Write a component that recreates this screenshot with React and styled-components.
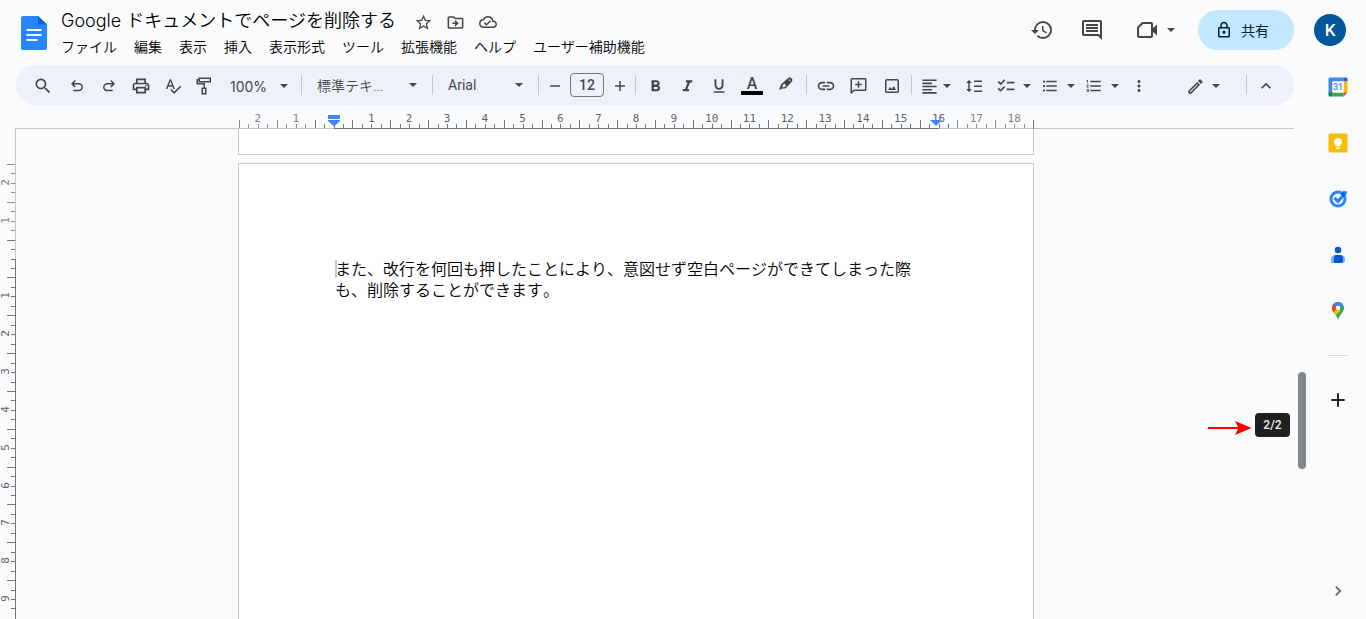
import {useState} from "react";
import styled, {createGlobalStyle} from "styled-components";
import {
    MdChecklist,
    MdExpandLess,
    MdChevronRight,
    MdFormatAlignLeft,
    MdFormatBold,
    MdFormatItalic,
    MdFormatListBulleted,
    MdFormatListNumbered,
    MdFormatUnderlined,
    MdHistory,
    MdLink,
    MdMoreVert,
    MdOutlineCloudDone,
    MdOutlineComment,
    MdOutlineDriveFileMove,
    MdOutlineLock,
    MdOutlineModeEdit,
    MdOutlinePrint,
    MdSearch,
    MdSpellcheck,
    MdStarOutline,
} from "react-icons/md";

const GlobalStyle = createGlobalStyle`
    * {
        box-sizing: border-box;
    }
    body {
        margin: 0;
        background: #f9fbfd;
        color: #1f1f1f;
        font-family: Roboto, "Noto Sans CJK JP", sans-serif;
    }
    button, input {
        font: inherit;
        color: inherit;
    }
    button {
        border: 0;
        padding: 0;
        background: none;
        cursor: pointer;
    }
    svg {
        display: block;
        flex: none;
    }
`;

const AppContainer = styled.div`
    display: flex;
    flex-direction: column;
    height: 100vh;
    overflow: hidden;
`;

const Header = styled.header`
    display: flex;
    flex: none;
    height: 65px;
    padding: 0 20px;
`;

const LogoLink = styled.a`
    padding: 16px 14px 0 1px;
`;

const TitleArea = styled.div`
    flex: 1;
    min-width: 0;
    padding-top: 8px;
`;

const TitleRow = styled.div`
    display: flex;
    align-items: center;
    height: 26px;
    h1 {
        margin: 0 12px 0 0;
        color: #000;
        font-size: 18px;
        font-weight: 350;
        line-height: 26px;
        font-family: Inter, "Noto Sans CJK JP", sans-serif;
        white-space: nowrap;
    }
`;

const TitleButton = styled.button`
    display: flex;
    justify-content: center;
    width: 32px;
    padding-top: 2px;
    color: #444746;
`;

const MenuBar = styled.nav`
    display: flex;
    gap: 17px;
    button {
        color: #000;
        font-size: 14px;
        font-weight: 350;
        line-height: 26px;
        white-space: nowrap;
    }
`;

const HeaderActions = styled.div`
    display: flex;
    align-items: center;
    height: 60px;
    color: #444746;
`;

const HeaderButton = styled.button`
    display: flex;
    align-items: center;
    justify-content: center;
    gap: 9px;
    width: ${props => props.$width}px;
    height: 40px;
`;

const ShareButton = styled.button`
    display: flex;
    align-items: center;
    justify-content: center;
    gap: 8px;
    width: 96px;
    height: 40px;
    margin: 0 20px 0 5px;
    padding-right: 8px;
    border-radius: 20px;
    background: #c2e7ff;
    color: #001d35;
    font-size: 14px;
`;

const Avatar = styled.button`
    width: 32px;
    height: 32px;
    border-radius: 50%;
    background: #01579b;
    color: #fff;
    font-size: 17px;
    font-weight: 500;
`;

const Body = styled.div`
    display: flex;
    flex: 1;
    min-height: 0;
`;

const Editor = styled.main`
    display: flex;
    flex: 1;
    flex-direction: column;
    min-width: 0;
`;

const Toolbar = styled.div`
    display: flex;
    align-items: center;
    flex: none;
    height: 40px;
    margin-left: 16px;
    padding: 0 9px 0 8px;
    border-radius: 20px;
    background: #edf2fa;
    color: #444746;
`;

const ToolButton = styled.button`
    display: flex;
    align-items: center;
    justify-content: center;
    flex: none;
    width: ${props => props.$width || 32}px;
    height: 32px;
    padding-top: 2px;
`;

const SplitButton = styled(ToolButton)`
    gap: ${props => props.$gap || 7}px;
`;

const SelectButton = styled.button`
    display: flex;
    align-items: center;
    justify-content: space-between;
    flex: none;
    width: ${props => props.$width}px;
    height: 32px;
    padding: 0 15px;
    font-size: 14px;
    font-weight: ${props => props.$weight || 400};
    white-space: nowrap;
`;

const ZoomButton = styled(SelectButton)`
    padding: 2px 13px 0 11px;
    font-family: Inter, sans-serif;
`;

const Divider = styled.span`
    flex: none;
    width: 1px;
    height: 20px;
    background: #c7c7c7;
`;

const SizeInput = styled.input`
    flex: none;
    width: 34px;
    height: 24px;
    padding: 0;
    border: 1px solid #747775;
    border-radius: 4px;
    background: none;
    font-size: 14px;
    font-weight: 500;
    text-align: center;
`;

const ColorLetter = styled.span`
    display: block;
    width: 22px;
    height: 18px;
    border-bottom: 4px solid #000;
    font-size: 16px;
    font-weight: 500;
    line-height: 14px;
`;

const Spacer = styled.div`
    flex: 1;
`;

const Ruler = styled.div`
    display: flex;
    justify-content: center;
    flex: none;
    height: 24px;
    margin-left: 15px;
    padding-right: 36px;
    border-bottom: 1px solid #c7c7c7;
`;

const RulerScale = styled.div`
    position: relative;
    display: flex;
    width: 795px;
    height: 24px;
`;

const RulerCell = styled.div`
    display: grid;
    flex: 1;
    border-bottom: 1px solid transparent;
    color: #5f6368;
    opacity: ${props => (props.$margin ? 0.8 : 1)};
    > * {
        grid-area: 1 / 1;
    }
    span {
        padding-top: 8px;
        font-family: "DejaVu Sans Mono", monospace;
        font-size: 11px;
        line-height: 12px;
        text-align: center;
    }
`;

const Ticks = styled.div`
    display: flex;
    align-items: flex-end;
    i {
        flex: 1;
        height: 4px;
        border-left: 1px solid #747775;
    }
    i:first-child {
        height: 8px;
    }
`;

const LastTick = styled.div`
    align-self: flex-end;
    width: 1px;
    height: 9px;
    background: #747775;
`;

const ActiveLine = styled.div`
    position: absolute;
    left: 12%;
    right: 12%;
    bottom: 0;
    height: 1px;
    background: #747775;
`;

const Marker = styled.svg`
    position: absolute;
    bottom: 2px;
    left: ${props => props.$left};
`;

const Workspace = styled.div`
    position: relative;
    display: flex;
    flex: 1;
    min-height: 0;
`;

const SideRuler = styled.div`
    flex: none;
    width: 16px;
    padding-top: 35px;
    border-right: 1px solid #c7c7c7;
    overflow: hidden;
`;

const SideScale = styled.div`
    display: flex;
    flex-direction: column;
    height: 454px;
`;

const SideCell = styled.div`
    display: grid;
    flex: 1;
    color: #5f6368;
    opacity: ${props => (props.$margin ? 0.8 : 1)};
    > * {
        grid-area: 1 / 1;
    }
    span {
        width: 12px;
        font-family: "DejaVu Sans Mono", monospace;
        font-size: 11px;
        line-height: 12px;
        text-align: center;
        writing-mode: vertical-rl;
        transform: rotate(180deg);
    }
`;

const SideTicks = styled.div`
    display: flex;
    flex-direction: column;
    align-items: flex-end;
    i {
        flex: 1;
        width: 4px;
        border-top: 1px solid #747775;
    }
    i:first-child {
        width: 8px;
    }
`;

const SideActiveLine = styled.div`
    position: absolute;
    top: 130px;
    bottom: 0;
    left: 15px;
    width: 1px;
    background: #747775;
`;

const Pages = styled.div`
    display: flex;
    flex: 1;
    flex-direction: column;
    align-items: center;
    gap: 8px;
    min-width: 0;
    padding-right: 38px;
    overflow: hidden;
`;

const PageEnd = styled.div`
    flex: none;
    width: 796px;
    height: 26px;
    border: 1px solid #c7c7c7;
    border-top: 0;
    background: #fff;
`;

const Page = styled.article`
    flex: none;
    width: 796px;
    height: 1124px;
    padding: 95px 96px;
    border: 1px solid #c7c7c7;
    background: #fff;
    color: #000;
    p {
        position: relative;
        margin: 0;
        font-size: 16px;
        font-weight: 350;
        font-kerning: none;
        line-height: 21px;
    }
`;

const TextCursor = styled.span`
    position: absolute;
    top: 1px;
    left: 0;
    width: 2px;
    height: 18px;
    background: #c7c7c7;
`;

const ScrollThumb = styled.div`
    position: absolute;
    top: 243px;
    right: -12px;
    width: 8px;
    height: 97px;
    border-radius: 4px;
    background: #80868b;
`;

const PageTip = styled.div`
    position: absolute;
    top: 284px;
    right: 4px;
    display: flex;
    align-items: center;
    gap: 3px;
    span {
        width: 35px;
        border-radius: 4px;
        background: #1f1f1f;
        color: #f2f2f2;
        font-size: 12px;
        font-weight: 500;
        line-height: 24px;
        text-align: center;
    }
    svg {
        margin-top: 5px;
    }
`;

const SidePanel = styled.aside`
    display: flex;
    flex-direction: column;
    align-items: center;
    flex: none;
    width: 72px;
    padding: 2px 0 8px 16px;
`;

const PanelButton = styled.button`
    display: flex;
    align-items: center;
    justify-content: center;
    width: 40px;
    height: 40px;
    margin-bottom: ${props => (props.$last ? 0 : 16)}px;
    color: ${props => props.$color || "inherit"};
`;

const PanelLine = styled.hr`
    width: 20px;
    height: 1px;
    margin: 8px 0 24px;
    border: 0;
    background: #dadce0;
`;

const Caret = () => (
    <svg width="8" height="4" viewBox="0 0 8 4" fill="currentColor">
        <path d="M0 0h8L4 4z" />
    </svg>
);

const DocsLogo = () => (
    <svg width="26" height="34" viewBox="0 0 26 34">
        <path d="M2 0h15l9 8.500V32a2 2 0 0 1-2 2H2a2 2 0 0 1-2-2V2a2 2 0 0 1 2-2z" fill="#2684fc" />
        <path d="M17 0l9 8.500h-9z" fill="#0066da" />
        <path d="M5.500 14h15M5.500 19h15M5.500 24h11" stroke="#fff" strokeWidth="2" />
    </svg>
);

const UndoIcon = ({flip}) => (
    <svg width="18" height="18" viewBox="0 -960 960 960" fill="currentColor">
        <path
            transform={flip ? "matrix(-1 0 0 1 960 0)" : undefined}
            d="M280-200v-80h284q63 0 109.500-40T720-420q0-60-46.500-100T564-560H312l104 104-56 56-200-200 200-200 56 56-104 104h252q97 0 163.500 63T800-420q0 94-66.500 157T564-200H280Z"
        />
    </svg>
);

const PaintIcon = () => (
    <svg width="16" height="18" viewBox="0 0 16 18" fill="none" stroke="currentColor" strokeWidth="1.500">
        <path d="M3.250 1.250h11v3.500h-11zM3 2.750H1.250v4h7V11M6.250 11.250h3.500v5.500h-3.500z" />
    </svg>
);

const HighlightIcon = () => (
    <svg width="16" height="20" viewBox="0 0 16 20">
        <path
            d="M1 13.500l2-5L10 2q1.800-1.400 3.500.2t.5 3.300L7.500 12.500H4l-1 1zM4.800 9l-.6 2.200h2.300L8.200 9.500 6.200 7.600z"
            fill="currentColor"
            fillRule="evenodd"
        />
        <path d="M10.800 3.500l1.700 1.700" stroke="#edf2fa" strokeWidth="1" />
    </svg>
);

const AddCommentIcon = () => (
    <svg width="18" height="18" viewBox="0 0 18 18" fill="none" stroke="currentColor" strokeWidth="1.500">
        <path d="M1.250 16V2.500q0-.75.75-.75h13q.75 0 .75.75v10q0 .75-.75.75H4z" strokeLinejoin="round" />
        <path d="M8.500 4.250v6.500M5.250 7.500h6.500" />
    </svg>
);

const PictureIcon = () => (
    <svg width="16" height="16" viewBox="0 0 16 16" fill="none" stroke="currentColor" strokeWidth="1.500">
        <rect x="1.750" y="1.750" width="12.500" height="12.500" rx="1" />
        <path d="M4 12l2-3 1.750 2 2-3L12 12z" fill="currentColor" stroke="none" />
    </svg>
);

const LineSpacingIcon = () => (
    <svg width="18" height="14" viewBox="0 0 18 14" fill="none" stroke="currentColor" strokeWidth="1.500">
        <path d="M8 2.250h8M8 7.250h8M8 12.250h8M3 3v8" />
        <path d="M0 4l3-3 3 3zM0 10l3 3 3-3z" fill="currentColor" stroke="none" />
    </svg>
);

const MinusIcon = () => (
    <svg width="12" height="12" viewBox="0 0 12 12" stroke="currentColor" strokeWidth="1.500">
        <path d="M1 6h10" />
    </svg>
);

const PlusIcon = ({size = 12}) => (
    <svg width={size} height={size} viewBox="0 0 12 12" stroke="currentColor" strokeWidth="1.500">
        <path d="M1 6h10M6 1v10" />
    </svg>
);

const MeetIcon = () => (
    <svg width="22" height="18" viewBox="0 0 22 18" fill="none" stroke="currentColor" strokeWidth="2">
        <path d="M6.500 2H15q1 0 1 1v12q0 1-1 1H3q-1 0-1-1V6.500z" strokeLinejoin="round" />
        <path d="M16 8l5-4.500v11L16 10z" fill="currentColor" stroke="none" />
    </svg>
);

const CalendarIcon = () => (
    <svg width="20" height="20" viewBox="0 0 20 20">
        <path d="M2 .5h13.500v4H4.500V16H.5V2A1.500 1.500 0 0 1 2 .5z" fill="#4285f4" />
        <path d="M15.500.5H18A1.500 1.500 0 0 1 19.500 2v2.500h-4z" fill="#1967d2" />
        <path d="M15.500 4.500h4v11h-4z" fill="#fbbc04" />
        <path d="M4.500 15.500h11v4h-11z" fill="#34a853" />
        <path d="M.5 15.500h4v4H2A1.500 1.500 0 0 1 .5 18z" fill="#188038" />
        <path d="M15.500 15.500h4l-4 4z" fill="#ea4335" />
        <path d="M4.500 4.500h11v11h-11z" fill="#fff" />
        <text x="10" y="13" textAnchor="middle" fontFamily="Roboto, sans-serif" fontSize="9" fontWeight="500" fill="#4285f4">
            31
        </text>
    </svg>
);

const KeepIcon = () => (
    <svg width="20" height="20" viewBox="0 0 20 20">
        <rect x=".5" y=".5" width="19" height="19" rx="1.500" fill="#fbbc04" />
        <path d="M10 5a4 4 0 0 1 2.200 7.300V13.500H7.800v-1.200A4 4 0 0 1 10 5z" fill="#fff" />
        <path d="M7.800 14.500h4.400V16H7.800z" fill="#fff" />
    </svg>
);

const TasksIcon = () => (
    <svg width="20" height="20" viewBox="0 0 20 20" fill="none">
        <circle cx="10" cy="10" r="7" stroke="#2684fc" strokeWidth="3" />
        <path d="M6.500 9l3.500 3.500L17.500 4" stroke="#2684fc" strokeWidth="3.200" />
        <path d="M14 6.500L17 3" stroke="#0066da" strokeWidth="3.500" />
        <circle cx="17.500" cy="3.500" r="1.600" fill="#2684fc" />
    </svg>
);

const ContactsIcon = () => (
    <svg width="20" height="20" viewBox="0 0 20 20">
        <path d="M3 18V14.500Q3 10 7.500 10h5q4.500 0 4.500 4.500 0 3.500-3 3.500z" fill="#7baaf7" />
        <path d="M6 18v-4.500Q6 10 8 10h4q3 0 3 3.500 0 4.500-1 4.500z" fill="#0b57d0" />
        <circle cx="10" cy="5" r="3.300" fill="#0b57d0" />
    </svg>
);

const MapsIcon = () => (
    <svg width="14" height="18" viewBox="0 0 14 18">
        <clipPath id="pin">
            <path d="M7 0a6 6 0 0 1 6 6.200c0 4-4.500 6-6 11.800-1.500-5.800-6-7.800-6-11.800A6 6 0 0 1 7 0z" />
        </clipPath>
        <g clipPath="url(#pin)">
            <path d="M0 0h14v18H0z" fill="#34a853" />
            <path d="M0 0h14L7 7z" fill="#4285f4" />
            <path d="M0 0l3 1.500L7 6 2.500 11 0 10z" fill="#ea4335" />
            <path d="M2 10.500L7 5.500 9.500 8.500 4 14z" fill="#fbbc04" />
            <path d="M2.500 1.500L7-1h6v3.500L7 7z" fill="#4285f4" />
        </g>
        <circle cx="7" cy="6" r="2.200" fill="#fff" />
    </svg>
);

const RedArrow = () => (
    <svg width="44" height="14" viewBox="0 0 44 14">
        <path d="M0 7h32" stroke="#f00" strokeWidth="2" />
        <path d="M27 0l16.500 7L27 14l3.500-7z" fill="#f00" />
    </svg>
);

const menus = ["ファイル", "編集", "表示", "挿入", "表示形式", "ツール", "拡張機能", "ヘルプ", "ユーザー補助機能"];

// 余白の 2cm から用紙の端まで、1cm ごとの目盛り
const columns = Array.from({length: 21}, (_, i) => i - 2);
const rows = Array.from({length: 12}, (_, i) => i - 2);

const HorizontalRuler = () => (
    <Ruler>
        <RulerScale>
            {columns.map(cm => (
                <RulerCell key={cm} $margin={cm < 0 || cm > 16}>
                    <span>{cm === 0 ? "" : Math.abs(cm)}</span>
                    <Ticks>
                        <i />
                        <i />
                        <i />
                        <i />
                    </Ticks>
                </RulerCell>
            ))}
            <LastTick />
            <ActiveLine />
            <Marker $left="89px" width="12" height="12" viewBox="0 0 12 12" fill="#4285f4">
                <path d="M0 0h12v4H0zM0 5h12v1l-6 5.500L0 6z" />
            </Marker>
            <Marker $left="691px" width="12" height="12" viewBox="0 0 12 12" fill="#4285f4">
                <path d="M0 5h12L6 11z" />
            </Marker>
        </RulerScale>
    </Ruler>
);

const VerticalRuler = () => (
    <SideRuler>
        <SideScale>
            {rows.map(cm => (
                <SideCell key={cm} $margin={cm < 0}>
                    <span>{cm === 0 ? "" : Math.abs(cm)}</span>
                    <SideTicks>
                        <i />
                        <i />
                        <i />
                        <i />
                    </SideTicks>
                </SideCell>
            ))}
        </SideScale>
        <SideActiveLine />
    </SideRuler>
);

const App = () => {
    const [fontSize, setFontSize] = useState(12);
    return (
        <AppContainer>
            <GlobalStyle />
            <Header>
                <LogoLink href="#" aria-label="ドキュメント">
                    <DocsLogo />
                </LogoLink>
                <TitleArea>
                    <TitleRow>
                        <h1>Google ドキュメントでページを削除する</h1>
                        <TitleButton aria-label="スター">
                            <MdStarOutline size={19} />
                        </TitleButton>
                        <TitleButton aria-label="移動">
                            <MdOutlineDriveFileMove size={19} />
                        </TitleButton>
                        <TitleButton aria-label="保存状態">
                            <MdOutlineCloudDone size={18} />
                        </TitleButton>
                    </TitleRow>
                    <MenuBar>
                        {menus.map(menu => (
                            <button key={menu}>{menu}</button>
                        ))}
                    </MenuBar>
                </TitleArea>
                <HeaderActions>
                    <HeaderButton $width={50} aria-label="履歴">
                        <MdHistory size={24} />
                    </HeaderButton>
                    <HeaderButton $width={50} aria-label="コメント">
                        <MdOutlineComment size={24} />
                    </HeaderButton>
                    <HeaderButton $width={76} aria-label="通話">
                        <MeetIcon />
                        <Caret />
                    </HeaderButton>
                    <ShareButton>
                        <MdOutlineLock size={18} />
                        共有
                    </ShareButton>
                    <Avatar>K</Avatar>
                </HeaderActions>
            </Header>
            <Body>
                <Editor>
                    <Toolbar>
                        <ToolButton $width={37} aria-label="検索">
                            <MdSearch size={20} />
                        </ToolButton>
                        <ToolButton aria-label="元に戻す">
                            <UndoIcon />
                        </ToolButton>
                        <ToolButton aria-label="やり直し">
                            <UndoIcon flip />
                        </ToolButton>
                        <ToolButton aria-label="印刷">
                            <MdOutlinePrint size={20} />
                        </ToolButton>
                        <ToolButton aria-label="スペルチェック">
                            <MdSpellcheck size={18} />
                        </ToolButton>
                        <ToolButton $width={30} aria-label="書式を貼り付け">
                            <PaintIcon />
                        </ToolButton>
                        <ZoomButton $width={82}>
                            100%
                            <Caret />
                        </ZoomButton>
                        <Divider />
                        <SelectButton $width={130} $weight={350}>
                            標準テキ...
                            <Caret />
                        </SelectButton>
                        <Divider />
                        <SelectButton $width={105}>
                            Arial
                            <Caret />
                        </SelectButton>
                        <Divider />
                        <ToolButton $width={31} aria-label="縮小" onClick={() => setFontSize(prev => prev - 1)}>
                            <MinusIcon />
                        </ToolButton>
                        <SizeInput
                            aria-label="フォントサイズ"
                            value={fontSize}
                            onChange={e => setFontSize(Number(e.target.value))}
                        />
                        <ToolButton $width={31} aria-label="拡大" onClick={() => setFontSize(prev => prev + 1)}>
                            <PlusIcon />
                        </ToolButton>
                        <Divider />
                        <ToolButton $width={38} aria-label="太字">
                            <MdFormatBold size={19} />
                        </ToolButton>
                        <ToolButton $width={26} aria-label="斜体">
                            <MdFormatItalic size={19} />
                        </ToolButton>
                        <ToolButton $width={38} aria-label="下線">
                            <MdFormatUnderlined size={18} />
                        </ToolButton>
                        <ToolButton $width={28} aria-label="文字の色">
                            <ColorLetter>A</ColorLetter>
                        </ToolButton>
                        <ToolButton $width={40} aria-label="ハイライト">
                            <HighlightIcon />
                        </ToolButton>
                        <Divider />
                        <ToolButton $width={38} aria-label="リンク">
                            <MdLink size={20} />
                        </ToolButton>
                        <ToolButton $width={27} aria-label="コメントを追加">
                            <AddCommentIcon />
                        </ToolButton>
                        <ToolButton $width={39} aria-label="画像">
                            <PictureIcon />
                        </ToolButton>
                        <Divider />
                        <SplitButton $width={46} $gap={4} aria-label="配置">
                            <MdFormatAlignLeft size={19} />
                            <Caret />
                        </SplitButton>
                        <ToolButton $width={33} aria-label="行間隔">
                            <LineSpacingIcon />
                        </ToolButton>
                        <SplitButton $width={45} aria-label="チェックリスト">
                            <MdChecklist size={20} />
                            <Caret />
                        </SplitButton>
                        <SplitButton $width={44} $gap={8} aria-label="箇条書き">
                            <MdFormatListBulleted size={18} />
                            <Caret />
                        </SplitButton>
                        <SplitButton $width={44} $gap={8} aria-label="番号付きリスト">
                            <MdFormatListNumbered size={18} />
                            <Caret />
                        </SplitButton>
                        <ToolButton $width={30} aria-label="その他">
                            <MdMoreVert size={18} />
                        </ToolButton>
                        <Spacer />
                        <SplitButton $width={86} aria-label="編集モード">
                            <MdOutlineModeEdit size={19} />
                            <Caret />
                        </SplitButton>
                        <Divider />
                        <ToolButton $width={38} aria-label="メニューを隠す">
                            <MdExpandLess size={20} />
                        </ToolButton>
                    </Toolbar>
                    <HorizontalRuler />
                    <Workspace>
                        <VerticalRuler />
                        <Pages>
                            <PageEnd />
                            <Page>
                                <p>
                                    <TextCursor />
                                    また、改行を何回も押したことにより、意図せず空白ページができてしまった際も、削除することができます。
                                </p>
                            </Page>
                        </Pages>
                        <PageTip>
                            <RedArrow />
                            <span>2/2</span>
                        </PageTip>
                        <ScrollThumb />
                    </Workspace>
                </Editor>
                <SidePanel>
                    <PanelButton aria-label="カレンダー">
                        <CalendarIcon />
                    </PanelButton>
                    <PanelButton aria-label="Keep">
                        <KeepIcon />
                    </PanelButton>
                    <PanelButton aria-label="ToDo リスト">
                        <TasksIcon />
                    </PanelButton>
                    <PanelButton aria-label="連絡先">
                        <ContactsIcon />
                    </PanelButton>
                    <PanelButton aria-label="マップ">
                        <MapsIcon />
                    </PanelButton>
                    <PanelLine />
                    <PanelButton aria-label="アドオンを取得">
                        <PlusIcon size={16} />
                    </PanelButton>
                    <Spacer />
                    <PanelButton $last $color="#5f6368" aria-label="サイドパネルを隠す">
                        <MdChevronRight size={20} />
                    </PanelButton>
                </SidePanel>
            </Body>
        </AppContainer>
    );
};

export default App;
